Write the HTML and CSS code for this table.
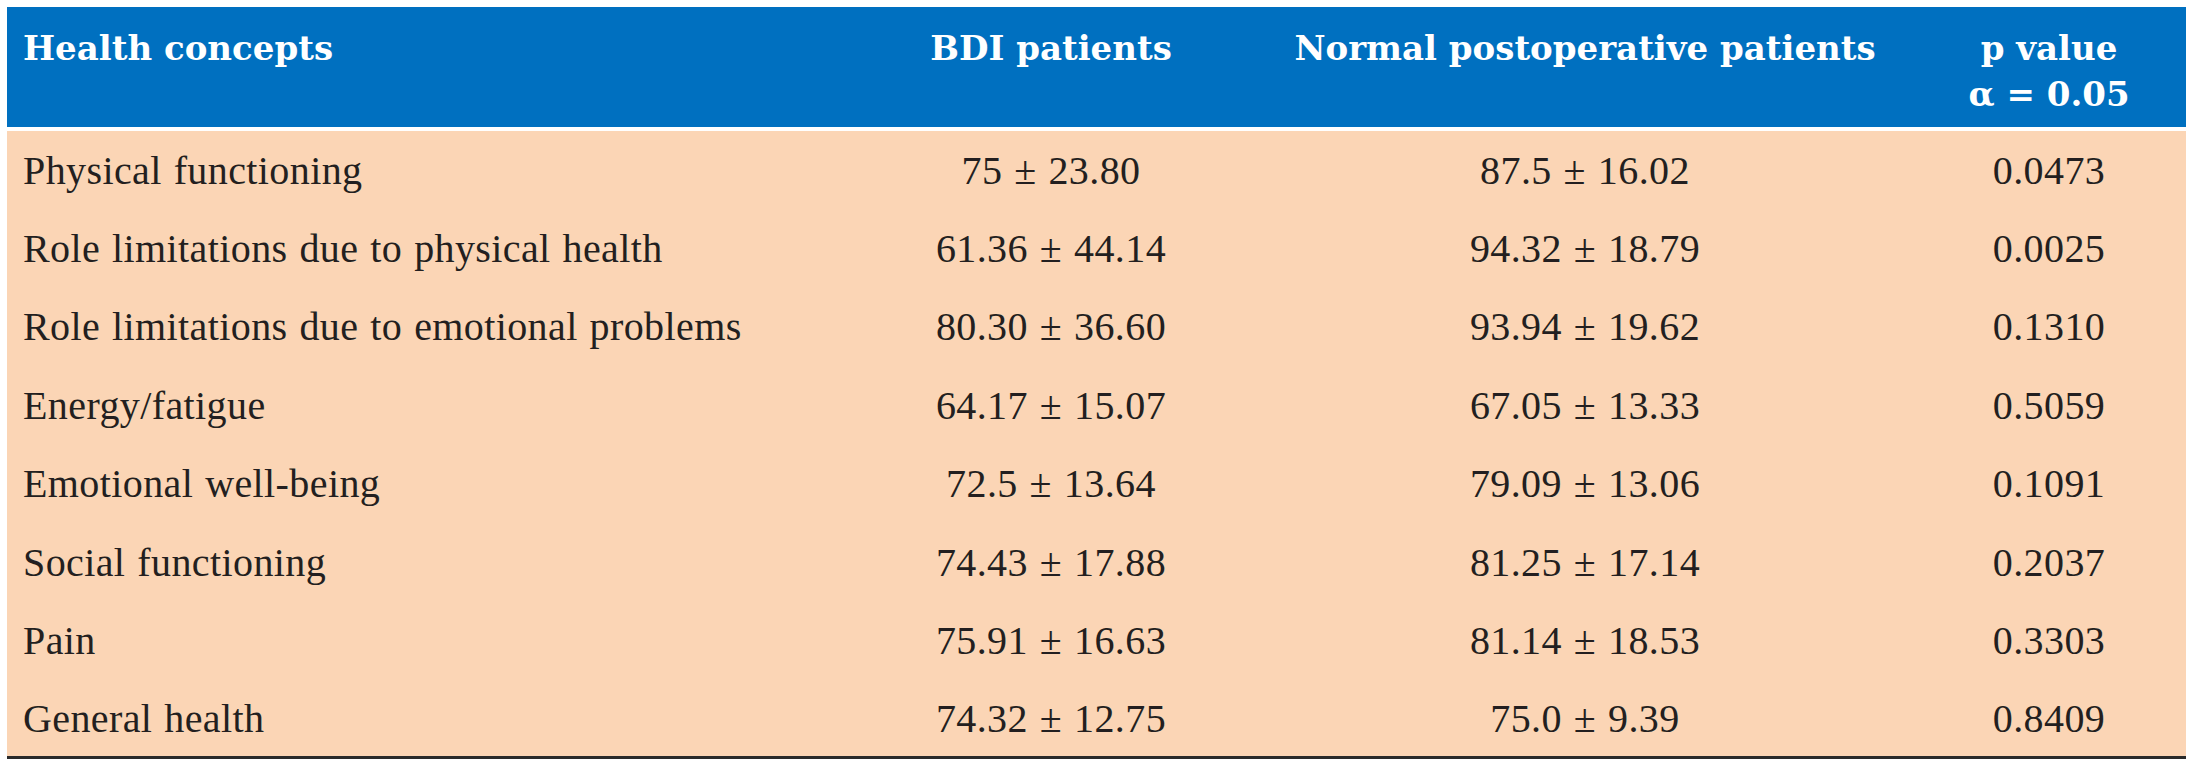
FILE: index.html
```html
<!DOCTYPE html>
<html>
<head>
<meta charset="utf-8">
<link rel="stylesheet" href="styles.css">
</head>
<body>
<table class="data">
  <colgroup>
    <col class="c1"><col class="c2"><col class="c3"><col class="c4">
  </colgroup>
  <thead>
    <tr>
      <th class="left">Health concepts</th>
      <th>BDI patients</th>
      <th>Normal postoperative patients</th>
      <th class="pv">p value<br>α = 0.05</th>
    </tr>
  </thead>
  <tbody>
    <tr><td class="left">Physical functioning</td><td>75 ± 23.80</td><td>87.5 ± 16.02</td><td class="pv">0.0473</td></tr>
    <tr><td class="left">Role limitations due to physical health</td><td>61.36 ± 44.14</td><td>94.32 ± 18.79</td><td class="pv">0.0025</td></tr>
    <tr><td class="left">Role limitations due to emotional problems</td><td>80.30 ± 36.60</td><td>93.94 ± 19.62</td><td class="pv">0.1310</td></tr>
    <tr><td class="left">Energy/fatigue</td><td>64.17 ± 15.07</td><td>67.05 ± 13.33</td><td class="pv">0.5059</td></tr>
    <tr><td class="left">Emotional well-being</td><td>72.5 ± 13.64</td><td>79.09 ± 13.06</td><td class="pv">0.1091</td></tr>
    <tr><td class="left">Social functioning</td><td>74.43 ± 17.88</td><td>81.25 ± 17.14</td><td class="pv">0.2037</td></tr>
    <tr><td class="left">Pain</td><td>75.91 ± 16.63</td><td>81.14 ± 18.53</td><td class="pv">0.3303</td></tr>
    <tr><td class="left">General health</td><td>74.32 ± 12.75</td><td>75.0 ± 9.39</td><td class="pv">0.8409</td></tr>
  </tbody>
</table>
</body>
</html>
```
FILE: styles.css
```css
html, body {
  margin: 0;
  padding: 0;
  background: #ffffff;
}
body {
  padding: 7px 0 0 7px;
}
.data {
  border-collapse: collapse;
  table-layout: fixed;
  width: 2179px;
  border-bottom: 3px solid #2a2a2a;
}
.c1 { width: 845px; }
.c2 { width: 398px; }
.c3 { width: 670px; }
.c4 { width: 266px; }
.data th {
  background: #0070c0;
  color: #ffffff;
  font-family: "DejaVu Serif", "Liberation Serif", serif;
  font-weight: bold;
  font-size: 34px;
  line-height: 46px;
  text-align: center;
  vertical-align: top;
  padding: 18px 0 7px 0;
  height: 95px;
  border-bottom: 4px solid #ffffff;
  white-space: nowrap;
}
.data tbody tr {
  height: 79px;
}
.data tbody tr:nth-child(even) {
  height: 78px;
}
.data td {
  background: #fbd5b5;
  color: #231f20;
  font-family: "Liberation Serif", serif;
  font-size: 40px;
  letter-spacing: 0.4px;
  word-spacing: 1.5px;
  text-align: center;
  vertical-align: middle;
  padding: 2px 0 0 0;
  white-space: nowrap;
}
.data .left {
  text-align: left;
  padding-left: 16px;
}
.data .pv {
  padding-right: 8px;
}
```
